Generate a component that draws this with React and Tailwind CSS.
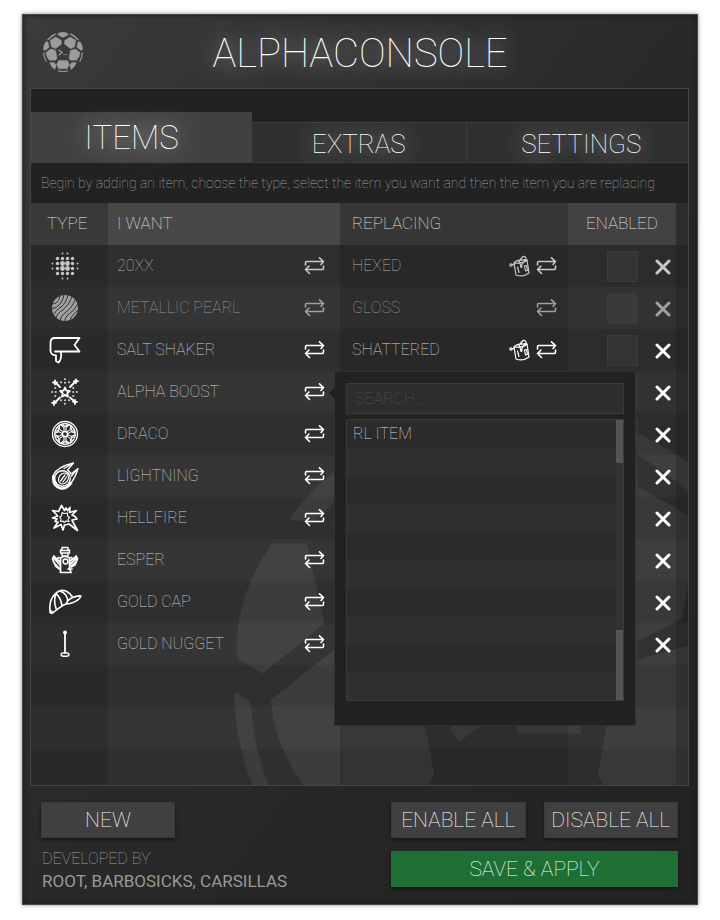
import React from 'react';

const SIDE_PLATES = [
  'M-86 -51 L-75 -51 L-69 -24 L-90 -7 L-98 -12 Q-99 -32 -86 -51 Z',
  'M-86 4 L-62 -15 L-37 -8 L-30 30 L-36 41 L-68 41 Q-84 24 -86 4 Z',
  'M-99 2 L-95 5 Q-94 26 -83 46 L-84 50 Q-98 28 -99 2 Z',
  'M-67 53 L-43 53 L-34 68 L-41 87 Q-60 76 -67 53 Z',
  'M-64 -59 L-36 -75 L-8 -58 L-8 -39 L-38 -16 L-58 -26 Z',
  'M-79 -61 Q-62 -83 -38 -92 L-36 -88 Q-56 -79 -71 -61 Z',
];

function Ball({ className }) {
  return (
    <svg viewBox="-100 -100 200 200" className={className} fill="currentColor" stroke="currentColor" strokeWidth="2" strokeLinejoin="round" aria-hidden="true">
      {SIDE_PLATES.map((d) => <path key={d} d={d} />)}
      <g transform="scale(-1 1)">
        {SIDE_PLATES.map((d) => <path key={d} d={d} />)}
      </g>
      <path d="M-27 -86 L0 -72 L27 -86 L19 -96 Q0 -101 -19 -96 Z" />
      <path d="M-23 43 L23 43 L31 62 L22 84 L-22 84 L-31 62 Z" />
      <path d="M-24 93 Q0 98 24 93 L24 96 Q0 101 -24 96 Z" />
      <path d="M-22 -10 L-4 3 L-22 16" fill="none" strokeWidth="6" strokeLinejoin="miter" />
      <path d="M0.5 12.5 H23 V15.5 H0.5 Z" stroke="none" />
    </svg>
  );
}

function Icon({ w = 28, h = 28, children, className = '' }) {
  return (
    <svg viewBox={`0 0 ${w} ${h}`} width={w} height={h} className={`shrink-0 ${className}`} fill="none" stroke="currentColor" strokeWidth="1.5" strokeLinecap="round" strokeLinejoin="round" aria-hidden="true">
      {children}
    </svg>
  );
}

function SwapIcon() {
  return (
    <Icon w={21} h={19}>
      <path d="M1.5 8 V6 Q1.5 4.5 2.5 4.5 H19.5 M15.5 0.8 L19.5 4.5 L17 7.5 M19.5 9 V11 Q19.5 12.5 18.5 12.5 H1.5 M5.5 16.5 L1.5 12.5 L5 9" strokeWidth="1.6" />
    </Icon>
  );
}

function BucketIcon() {
  return (
    <Icon w={22} h={22}>
      <g strokeWidth="1.2">
        <path d="M5 8 L7 20 Q14 22.5 20 18 L18 5" />
        <path d="M5 8 Q7 4.5 18 5 Q15 8.5 5 8 M10 6 L14 1.5 Q17.5 1 17 5 M10 6 L12 11 L16 5" />
        <path d="M8.5 12 L10 17.5 M15.5 11 L17.5 10.5 L18.5 15.5 L16.5 16 Z M3 10 L5.5 9" />
        <circle cx="2" cy="10" r="1.2" />
        <circle cx="12.3" cy="11.5" r="0.8" />
      </g>
    </Icon>
  );
}

function CrossIcon() {
  return (
    <Icon w={16} h={16}>
      <path d="M2 2 L14 14 M14 2 L2 14" strokeWidth="3" />
    </Icon>
  );
}

const DOTS = [-2.5, -1.5, -0.5, 0.5, 1.5, 2.5];

function DecalIcon() {
  return (
    <Icon>
      {DOTS.flatMap((y) =>
        DOTS.map((x) => {
          const d = Math.max(Math.abs(x), Math.abs(y));
          const s = Math.abs(x) + Math.abs(y);
          const r = d < 1 ? 2.4 : d < 2 ? 1.7 : s < 3.5 ? 0.9 : 0;
          return <circle key={`${x} ${y}`} cx={14 + x * 5} cy={14 + y * 5} r={r} fill="currentColor" stroke="none" />;
        })
      )}
    </Icon>
  );
}

function PaintIcon() {
  return (
    <Icon>
      <circle cx="14" cy="14" r="13" fill="currentColor" stroke="none" />
      <g stroke="#2f2f2f" strokeWidth="1">
        <path d="M1 10 Q8 10 9 2 M1 15 Q6 14 9 10 Q12 7 13 1 M3 20 Q5 16 10 13 Q15 9 17 1" />
        <path d="M5 24 Q6 19 12 16 Q18 11 21 3 M9 27 Q9 22 15 18 Q21 14 24 6 M14 28 Q13 24 18 20 Q24 16 27 10 M19 27 Q19 23 27 16" />
      </g>
    </Icon>
  );
}

function BannerIcon() {
  return (
    <Icon w={32}>
      <path d="M5 2 H30.5 L25.5 9 L30.5 15.5 H6 M5 2 Q1.5 2.5 1.5 7 V15 Q2 19 7 19.5 V25 L9.5 26.5 Q13 23 12 16" strokeWidth="1.8" />
    </Icon>
  );
}

function BoostIcon() {
  return (
    <Icon>
      <path d="M14 9.5 L15.4 12.6 L18.8 13 L16.3 15.2 L17 18.6 L14 16.9 L11 18.6 L11.7 15.2 L9.2 13 L12.6 12.6 Z" strokeWidth="1.8" />
      <path d="M5.5 5.5 L9 9 M19 9 L24 4 M19 19.5 L23 23 M9 19.5 L4 24.5" strokeWidth="1.9" />
      <path d="M4 2.5 V6.5 M2 4.5 H6 M25 1.5 V5 M23 3.2 H27 M24 22 V26 M22 23.8 H26 M3 23 V27 M1 24.8 H5" strokeWidth="1.8" />
      <path d="M14 1 V6 M14 22 V27 M1 14 H6 M22 14 H27 M10 4 V6 M18 4 V6 M10 22 V24 M18 22 V24 M4 10 H6 M4 18 H6 M22 10 H24 M22 18 H24" strokeWidth="1.6" strokeDasharray="0.5 3" />
    </Icon>
  );
}

const SPOKES = [0, 60, 120, 180, 240, 300];

function WheelIcon() {
  return (
    <Icon>
      <circle cx="14" cy="14" r="12.5" strokeWidth="1.3" />
      <circle cx="14" cy="14" r="10.3" strokeWidth="1.2" />
      <circle cx="14" cy="14" r="2.6" strokeWidth="1.5" />
      {SPOKES.map((a) => (
        <path key={a} d="M13 11 V7.5 L10 5 M15 11 V7.5 L18 5 M11.8 4.8 L14 6.5 L16.2 4.8" strokeWidth="1.1" transform={`rotate(${a} 14 14)`} />
      ))}
    </Icon>
  );
}

function MeteorIcon() {
  return (
    <Icon>
      <path d="M2.5 13 Q6 5 22.5 1 L16.5 8 Q19 10 20 12 L27 6.5 Q25 14 19.5 22" strokeWidth="1.3" />
      <path d="M2.5 14 Q1 24 10 26.5 Q16 27 20 21" strokeWidth="2.6" />
      <circle cx="11.5" cy="16.5" r="7.8" strokeWidth="1.4" />
      <ellipse cx="12.5" cy="16.5" rx="4.6" ry="5.8" strokeWidth="1.1" transform="rotate(35 12.5 16.5)" />
      <path d="M9.5 19 L14 13 M12 20 L15.5 15 M13 6.5 L19 3 M20.5 14 L24.5 9" strokeWidth="1.3" />
    </Icon>
  );
}

function BurstIcon() {
  return (
    <Icon>
      <path d="M10.5 1.5 L13.5 6.5 L15 4 L16.5 6.5 L19 3.5 L18.5 8.5 L25.5 6.5 L21 11 L24 12.5 L26 15 L21 16 L23 20 L26.5 26.5 L18 20 L16 20.5 L13.5 21 L12 26 L10 20.5 L3 24 L7 18 L4 17.5 L6 15 L1.5 14 L6.5 12 L5 10 L1.5 6.5 L7.5 7.5 Z" strokeWidth="1.7" />
      <path d="M11 8.5 L13 9.5 L16.5 9 L16.5 12 L18.5 13.5 L17 15.5 L18 17.5 L15 17 L13 18.5 L12 17 L9.5 17.5 L10 15 L8.5 13 L10.5 12 Z" strokeWidth="1.1" />
    </Icon>
  );
}

function TopperIcon() {
  return (
    <Icon>
      <path d="M11 1.5 H17 V4 H18.5 V7 H9.5 V4 H11 Z M9.5 4.5 H18.5 M11 7 V10 H17 V7" strokeWidth="1.4" />
      <path d="M9.5 12 Q14 9 18.5 12 V22 L20 26.5 H9.5 Z" strokeWidth="1.7" />
      <circle cx="14.5" cy="15.5" r="2.4" />
      <path d="M8 11.5 L5.5 13 L3 10 L1.5 13 L4.5 20 L8.5 23 M3.5 13 L9 19 M2.5 16 L8 22 M4 11.5 L9 16 M20 11.5 L22.5 13 L25 10 L26.5 13 L24 19 L20 21 M25 13 L19 18 M25 16 L20 20 M24 11.5 L19 15 M17 23 H21" strokeWidth="1.7" />
    </Icon>
  );
}

function CapIcon() {
  return (
    <Icon w={34} h={26}>
      <path d="M2 21 Q1 11 7 5 Q12 0 18 2 Q22 4 25 8.5 Q29 6.5 33 7 Q31 12 22 14.5 L18 15 Q13 17 4 24.5 L2 23.5 Z M18 15 Q20 10 25 8.5 M12 2 Q20 5 19.5 12.5 M8 4.5 Q13 9 14 17 M8 4.5 Q5 12 8.5 21 M2 21 L5 23.5" strokeWidth="1.6" />
    </Icon>
  );
}

function AntennaIcon() {
  return (
    <Icon>
      <circle cx="14" cy="2.5" r="1.2" fill="currentColor" />
      <path d="M14 3 V23" strokeWidth="1.8" />
      <ellipse cx="14" cy="24.5" rx="4" ry="1.8" strokeWidth="1.5" />
    </Icon>
  );
}

const FULL = { text: 'text-[#d0d0d0]', icon: 'text-white' };
const DIM = { text: 'text-[#b0b0b0]', icon: 'text-[#c8c8c8]' };
const FAINT = { text: 'text-[#989898]', icon: 'text-[#a0a0a0]' };

const ITEMS = [
  { type: 'Decal', Glyph: DecalIcon, want: '20XX', replacing: 'HEXED', paint: true, tone: DIM },
  { type: 'Paint finish', Glyph: PaintIcon, want: 'METALLIC PEARL', replacing: 'GLOSS', tone: FAINT },
  { type: 'Banner', Glyph: BannerIcon, want: 'SALT SHAKER', replacing: 'SHATTERED', paint: true, tone: FULL },
  { type: 'Boost', Glyph: BoostIcon, want: 'ALPHA BOOST', tone: FULL, picking: true },
  { type: 'Wheels', Glyph: WheelIcon, want: 'DRACO', tone: FULL },
  { type: 'Trail', Glyph: MeteorIcon, want: 'LIGHTNING', tone: FULL },
  { type: 'Goal explosion', Glyph: BurstIcon, want: 'HELLFIRE', tone: FULL },
  { type: 'Topper', Glyph: TopperIcon, want: 'ESPER', tone: FULL },
  { type: 'Hat', Glyph: CapIcon, want: 'GOLD CAP', tone: FULL },
  { type: 'Antenna', Glyph: AntennaIcon, want: 'GOLD NUGGET', tone: FULL },
];

const LIST_ROWS = ['RL ITEM', '', '', '', '', '', '', '', '', ''];

function ItemPicker() {
  return (
    <div className="absolute left-full top-0 z-10 -ml-[6px] w-[302px] border border-[#303030] bg-[#222] px-[11px] pb-6 pt-[11px]">
      <div className="absolute -left-[6px] top-[15px] border-y-6 border-r-6 border-y-transparent border-r-[#222]" />
      <input
        type="text"
        aria-label="Search items"
        placeholder="SEARCH..."
        className="block h-[31px] w-full border border-[#3a3a3a] bg-[#2d2d2d] px-2 text-base font-thin text-[#b4b4b4] outline-none placeholder:text-[#505050]"
      />
      <div className="mt-[5px] flex h-[282px] border border-[#3a3a3a] bg-[#2f2f2f]">
        <ul className="flex-1">
          {LIST_ROWS.map((label, i) => (
            <li key={i} className="h-7 px-[6px] text-base leading-7 text-[#dcdcdc] odd:bg-[#2b2b2b]">{label}</li>
          ))}
        </ul>
        <div className="flex w-[7px] flex-col justify-between bg-[#323232]">
          <div className="h-[43px] bg-[#555]" />
          <div className="h-[70px] bg-[#555]" />
        </div>
      </div>
    </div>
  );
}

function ItemRow({ item }) {
  const { type, Glyph, want, replacing, paint, tone, picking } = item;
  return (
    <tr className={`h-[42px] even:bg-white/3 ${tone.icon}`}>
      <td className="bg-black/12">
        <button type="button" aria-label={type} className="mx-auto flex w-[66px] justify-center pr-[10px]"><Glyph /></button>
      </td>
      <td className="relative">
        <div className="flex items-center justify-between pl-[9px] pr-[15px]">
          <span className={tone.text}>{want}</span>
          <button type="button" aria-label={`Change ${want}`}><SwapIcon /></button>
        </div>
        {picking && <ItemPicker />}
      </td>
      <td className="bg-black/15">
        {replacing && (
          <div className="flex items-center gap-[5px] pl-3 pr-[11px]">
            <span className={`flex-1 ${tone.text}`}>{replacing}</span>
            {paint && <button type="button" aria-label={`Paint ${replacing}`}><BucketIcon /></button>}
            <button type="button" aria-label={`Change ${replacing}`}><SwapIcon /></button>
          </div>
        )}
      </td>
      <td className="bg-black/5">
        <div className="flex items-center justify-end gap-[17px] pr-[5px]">
          <input type="checkbox" aria-label={`Enable ${want}`} className="size-[31px] appearance-none border border-[#3a3a3a] bg-white/4" />
          <button type="button" aria-label={`Remove ${want}`} className="pt-px"><CrossIcon /></button>
        </div>
      </td>
      <td className="bg-black/20" />
    </tr>
  );
}

function EmptyRow({ last }) {
  return (
    <tr className={`even:bg-white/3 ${last ? 'h-9' : 'h-[42px]'}`}>
      <td className="bg-black/12" />
      <td />
      <td className="bg-black/15" />
      <td className="bg-black/5" />
      <td className="bg-black/20" />
    </tr>
  );
}

const BUTTON = 'h-9 border border-[#3a3a3a] bg-[#404040] text-[21px] leading-[34px] text-white shadow-[0_2px_3px_#161616]';
const TAB = 'h-[41px] flex-1 border-y border-[#3d3d3d] bg-[#303030] pt-[2px] text-[26px] leading-none text-white [text-shadow:0_0_20px_#ccc,0_0_28px_#aaa]';

export default function App() {
  return (
    <div className="bg-white px-[22px] pb-[15px] pt-[14px] font-['Roboto','Liberation_Sans',sans-serif] font-thin antialiased">
      <main className="border border-[#444] bg-linear-to-br from-[#3b3b3b] via-[#292929] via-50% to-[#222] pl-[7px] pr-2 shadow-[0_0_4px_#888,inset_0_0_5px_#1c1c1c]">
        <header className="grid h-[73px] grid-cols-[40px_1fr_40px] items-center pl-[13px] pr-3">
          <Ball className="size-10 text-[#9c9c9c]" />
          <h1 className="pt-1 text-center text-[40px] leading-none text-white [text-shadow:0_0_20px_#aaa,0_0_32px_#aaa]">ALPHACONSOLE</h1>
        </header>

        <section className="relative isolate overflow-hidden border border-[#444] bg-[#222]">
          <nav className="flex items-end pt-[23px]">
            <button type="button" className="h-[51px] w-[221px] shrink-0 bg-[#414141] pr-5 text-[33px] leading-none text-white [text-shadow:0_0_20px_#ccc,0_0_32px_#ccc]">ITEMS</button>
            <button type="button" className={TAB}>EXTRAS</button>
            <button type="button" className={`${TAB} border-l pl-2`}>SETTINGS</button>
          </nav>
          <p className="h-10 pl-[10px] text-sm leading-[41px] text-[#a0a0a0]">
            Begin by adding an item, choose the type, select the item you want and then the item you are replacing
          </p>

          <div className="relative">
            <div className="absolute inset-0 -z-10 overflow-hidden bg-[#2f2f2f]">
              <Ball className="absolute left-[203px] top-[205px] size-[564px] text-white opacity-6" />
            </div>
            <table className="w-full table-fixed border-collapse text-base">
              <colgroup>
                <col className="w-[77px]" />
                <col className="w-[232px]" />
                <col />
                <col className="w-[108px]" />
                <col className="w-3" />
              </colgroup>
              <thead>
                <tr className="h-[42px] text-left text-[17px] text-[#e6e6e6] [&>th]:font-thin">
                  <th className="bg-[#393939] pl-4">TYPE</th>
                  <th className="bg-[#484848] pl-[9px]">I WANT</th>
                  <th className="bg-[#363636] pl-3">REPLACING</th>
                  <th className="bg-[#424242] text-center">ENABLED</th>
                  <td className="bg-[#2d2d2d]" />
                </tr>
              </thead>
              <tbody>
                {ITEMS.map((item) => <ItemRow key={item.want} item={item} />)}
                <EmptyRow />
                <EmptyRow />
                <EmptyRow last />
              </tbody>
            </table>
          </div>
        </section>

        <footer className="flex justify-between px-[11px] pb-3 pt-4">
          <div>
            <button type="button" className={`${BUTTON} w-[134px]`}>NEW</button>
            <p className="mt-[10px] pl-px text-base leading-[22px] text-[#a0a0a0]">DEVELOPED BY</p>
            <p className="pl-px text-[17px] font-normal leading-[22px] text-[#999]">ROOT, BARBOSICKS, CARSILLAS</p>
          </div>
          <div className="grid w-[287px] grid-cols-2 content-start gap-x-[18px] gap-y-[13px]">
            <button type="button" className={BUTTON}>ENABLE ALL</button>
            <button type="button" className={BUTTON}>DISABLE ALL</button>
            <button type="button" className="col-span-2 h-9 bg-[#1d6f35] text-[21px] leading-9 text-white shadow-[0_2px_3px_#161616]">SAVE &amp; APPLY</button>
          </div>
        </footer>
      </main>
    </div>
  );
}
